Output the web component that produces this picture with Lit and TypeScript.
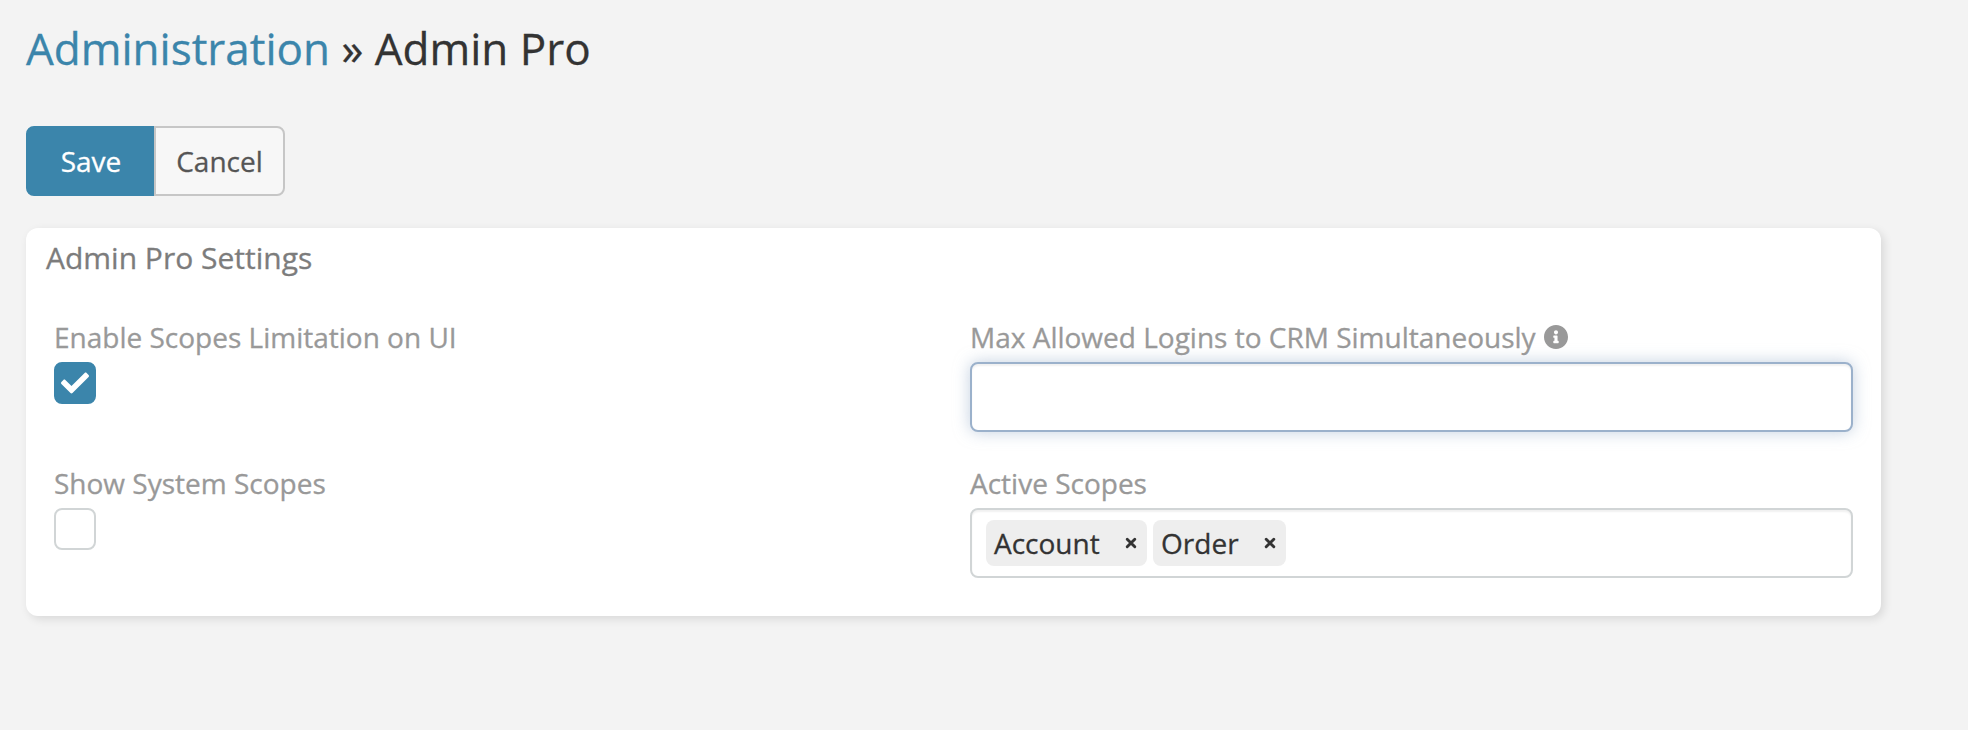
import { LitElement, html, css, svg } from "lit";
import { customElement, property } from "lit/decorators.js";

@customElement("scope-tag")
class ScopeTag extends LitElement {
  @property() label = "";

  static styles = css`
    :host {
      display: flex;
      align-items: center;
      justify-content: space-between;
      box-sizing: border-box;
      height: 46px;
      padding: 0 10.2px 0 8px;
      border-radius: 8px;
      background: #eee;
      color: #333;
      line-height: 46px;
    }
    .remove {
      display: block;
      width: 12px;
      height: 12px;
      margin-left: 25.2px;
    }
  `;

  render() {
    return html`<span>${this.label}</span>
      <svg class="remove" viewBox="0 0 12 12">
        <path
          d="M2.2 2.2 9.8 9.8M9.8 2.2 2.2 9.8"
          stroke="#333"
          stroke-width="2.9"
          stroke-linecap="round"
        />
      </svg>`;
  }
}

@customElement("check-box")
class CheckBox extends LitElement {
  @property({ type: Boolean }) checked = false;

  static styles = css`
    .box {
      box-sizing: border-box;
      width: 42px;
      height: 42px;
      border: 2px solid #d1d5d6;
      border-radius: 8px;
      background: #fff;
      display: flex;
      align-items: center;
      justify-content: center;
    }
    .box.on {
      background: #3b85ab;
      border-color: #3b85ab;
    }
    svg {
      width: 28px;
      height: 28px;
    }
  `;

  render() {
    return html`<div class="box ${this.checked ? "on" : ""}">
      ${this.checked
        ? html`<svg viewBox="0 0 512 512">
            ${svg`<path fill="#fff" d="M173.898 439.404l-166.4-166.4c-9.997-9.997-9.997-26.206 0-36.204l36.203-36.204c9.997-9.998 26.207-9.998 36.204 0L192 312.69 432.095 72.596c9.997-9.997 26.207-9.997 36.204 0l36.203 36.204c9.997 9.997 9.997 26.206 0 36.204l-294.4 294.401c-9.998 9.997-26.207 9.997-36.204-.001z"/>`}
          </svg>`
        : ""}
    </div>`;
  }
}

@customElement("app-root")
class AppRoot extends LitElement {
  static styles = css`
    :host {
      display: block;
      box-sizing: border-box;
      min-height: 730px;
      padding: 18px 87px 0 26px;
      background: #f3f3f3;
      font-family: "Open Sans", sans-serif;
      font-size: 28px;
      color: #333;
      -webkit-text-stroke-width: 0.3px;
    }
    .title {
      margin: 0;
      font-size: 44px;
      font-weight: 400;
      line-height: 60px;
      white-space: pre;
    }
    .link {
      color: #3b85ab;
    }
    .buttons {
      display: flex;
      margin-top: 48px;
    }
    .btn {
      box-sizing: border-box;
      height: 70px;
      border: 2px solid #c6c6c6;
      background: #f7f7f7;
      color: #555;
      font: inherit;
      padding: 0;
    }
    .save {
      width: 128px;
      padding-left: 2px;
      border-color: #3b85ab;
      background: #3b85ab;
      color: #fff;
      border-radius: 8px 0 0 8px;
    }
    .cancel {
      width: 131px;
      border-radius: 0 8px 8px 0;
    }
    .card {
      box-sizing: border-box;
      height: 388px;
      margin-top: 32px;
      padding: 8px 28px 0;
      border-radius: 12px;
      background: #fff;
      box-shadow: 3px 3px 10px rgba(0, 0, 0, 0.11);
    }
    .card-title {
      margin: 0 0 0 -8px;
      font-size: 30px;
      font-weight: 400;
      line-height: 44px;
      color: #7c7c7c;
    }
    .grid {
      display: grid;
      grid-template-columns: 883px 883px;
      column-gap: 33px;
      row-gap: 30px;
      margin-top: 37px;
    }
    .cell {
      height: 116px;
    }
    .label {
      display: flex;
      align-items: center;
      height: 40px;
      margin-bottom: 5px;
      line-height: 40px;
      color: #999;
      white-space: nowrap;
    }
    .info {
      width: 24px;
      height: 24px;
      margin-left: 8px;
    }
    .field {
      display: block;
      box-sizing: border-box;
      width: 100%;
      height: 70px;
      border: 2px solid #d1d5d6;
      border-radius: 8px;
      background: #fff;
      box-shadow: inset 0 2px 2px rgba(0, 0, 0, 0.06);
    }
    .active {
      border-color: #9bb1cb;
      outline: none;
      box-shadow: inset 0 2px 2px rgba(0, 0, 0, 0.06),
        0 0 16px rgba(155, 177, 203, 0.6);
    }
    .tags {
      display: flex;
      gap: 6px;
      padding: 10px 14px;
    }
  `;

  render() {
    return html`
      <h3 class="title"><span class="link">Administration</span> » Admin Pro</h3>
      <div class="buttons">
        <button class="btn save">Save</button>
        <button class="btn cancel">Cancel</button>
      </div>
      <section class="card">
        <h4 class="card-title">Admin Pro Settings</h4>
        <div class="grid">
          <div class="cell">
            <div class="label">Enable Scopes Limitation on UI</div>
            <check-box checked></check-box>
          </div>
          <div class="cell">
            <div class="label">
              Max Allowed Logins to CRM Simultaneously
              <svg class="info" viewBox="8 8 496 496">
                <path
                  fill="#999"
                  d="M256 8C119.043 8 8 119.083 8 256c0 136.997 111.043 248 248 248s248-111.003 248-248C504 119.083 392.957 8 256 8zm0 110c23.196 0 42 18.804 42 42s-18.804 42-42 42-42-18.804-42-42 18.804-42 42-42zm56 254c0 6.627-5.373 12-12 12h-88c-6.627 0-12-5.373-12-12v-24c0-6.627 5.373-12 12-12h12v-64h-12c-6.627 0-12-5.373-12-12v-24c0-6.627 5.373-12 12-12h64c6.627 0 12 5.373 12 12v100h12c6.627 0 12 5.373 12 12v24z"
                />
              </svg>
            </div>
            <input class="field active" type="text" />
          </div>
          <div class="cell">
            <div class="label">Show System Scopes</div>
            <check-box></check-box>
          </div>
          <div class="cell">
            <div class="label">Active Scopes</div>
            <div class="field tags">
              <scope-tag label="Account"></scope-tag>
              <scope-tag label="Order"></scope-tag>
            </div>
          </div>
        </div>
      </section>
    `;
  }
}
